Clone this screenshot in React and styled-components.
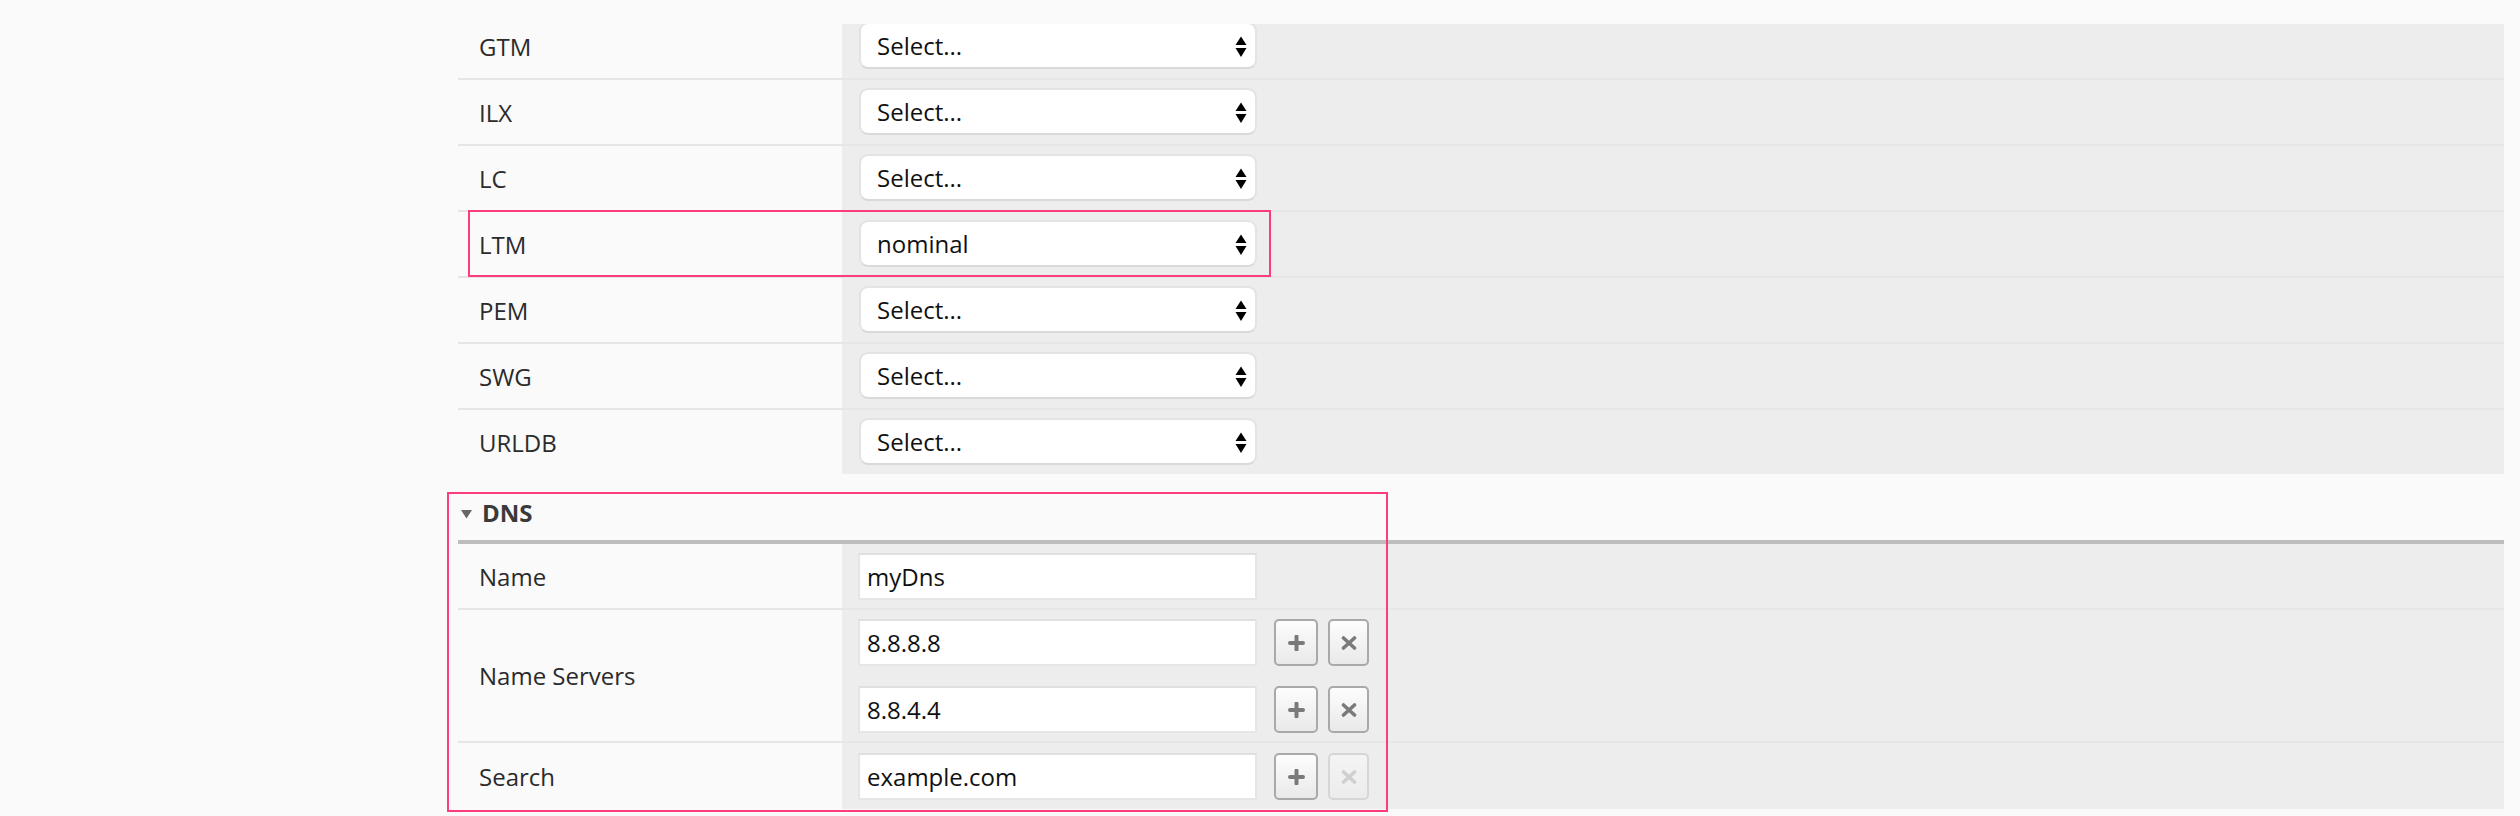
import React from "react";
import styled, { createGlobalStyle } from "styled-components";

const GlobalStyle = createGlobalStyle`
  html, body { margin: 0; padding: 0; }
  body {
    background: #fafafa;
    font-family: "Open Sans", "Liberation Sans", sans-serif;
    color: #2b2b2b;
  }
  * { box-sizing: border-box; }
`;

const Page = styled.div`
  width: 2520px;
  height: 816px;
  padding: 24px 16px 0 458px;
  overflow: hidden;
`;

const Clip = styled.div`
  overflow: hidden;
`;

const Table = styled.div`
  margin-top: ${(p) => p.$offset || 0}px;
`;

const Row = styled.div`
  position: relative;
  display: grid;
  grid-template-columns: 384px 1fr;
  border-bottom: ${(p) => (p.$last ? "none" : "2px solid #e6e6e6")};
`;

const Label = styled.div`
  display: flex;
  align-items: center;
  padding-left: 21px;
  font-size: 24px;
  color: #2b2b2b;
`;

const Value = styled.div`
  background: #ededed;
  padding: ${(p) => p.$pad || "8px 0 9px 17px"};
  display: flex;
  flex-direction: column;
  gap: 20px;
`;

const SelectBox = styled.div`
  position: relative;
  width: 398px;
  height: 47px;
  background: #fff;
  border: 2px solid #e3e3e3;
  border-bottom-color: #d9d9d9;
  border-radius: 9px;
  display: flex;
  align-items: center;
  padding-left: 16px;
  font-size: 24px;
  color: #111;
`;

const Arrows = styled.svg`
  position: absolute;
  right: 7px;
  top: 11px;
`;

const Highlight = styled.div`
  position: absolute;
  border: 2px solid #fb3d7b;
  pointer-events: none;
  left: ${(p) => p.$left}px;
  top: ${(p) => p.$top}px;
  width: ${(p) => p.$w}px;
  height: ${(p) => p.$h}px;
`;

const Section = styled.div`
  position: relative;
`;

const SectionHeader = styled.div`
  height: 70px;
  padding: 22px 0 0 2px;
  display: flex;
  align-items: flex-start;
  gap: 9px;
  border-bottom: 4px solid #bdbdbd;
  font-size: 24px;
  font-weight: 700;
  color: #3a3a3a;
  line-height: 33px;
`;

const Caret = styled.svg`
  margin-top: 13px;
`;

const Entry = styled.div`
  display: flex;
  align-items: center;
`;

const TextInput = styled.div`
  width: 399px;
  height: 47px;
  background: #fff;
  border: 2px solid #e6e6e6;
  border-top-color: #e0e0e0;
  display: flex;
  align-items: center;
  padding-left: 7px;
  font-size: 24px;
  color: #111;
  margin-left: -1px;
`;

const Buttons = styled.div`
  display: flex;
  gap: 10px;
  margin-left: 17px;
`;

const IconButton = styled.div`
  width: ${(p) => p.$w}px;
  height: 47px;
  border: 2px solid ${(p) => (p.$disabled ? "#d6d6d6" : "#a9a9a9")};
  border-radius: 5px;
  background: ${(p) =>
    p.$disabled
      ? "linear-gradient(#f4f4f4, #ececec)"
      : "linear-gradient(#fdfdfd, #e9e9e9)"};
  display: flex;
  align-items: center;
  justify-content: center;
  color: ${(p) => (p.$disabled ? "#cfcfcf" : "#7a7a7a")};
`;

const SelectArrows = () => (
  <Arrows width="14" height="24" viewBox="0 0 14 24">
    <path d="M7 1.5 L12.5 10 L1.5 10 Z" fill="#000" />
    <path d="M1.5 13 L12.5 13 L7 22 Z" fill="#000" />
  </Arrows>
);

const PlusIcon = () => (
  <svg width="17" height="16" viewBox="0 0 17 16">
    <path d="M8.5 1.5 V14.5 M2 8 H15" stroke="currentColor" strokeWidth="4" strokeLinecap="round" />
  </svg>
);

const TimesIcon = () => (
  <svg width="16" height="14" viewBox="0 0 16 14">
    <path d="M2.5 2 L13.5 12 M13.5 2 L2.5 12" stroke="currentColor" strokeWidth="3.6" strokeLinecap="round" />
  </svg>
);

const modules = [
  { name: "GTM", value: "Select..." },
  { name: "ILX", value: "Select..." },
  { name: "LC", value: "Select..." },
  { name: "LTM", value: "nominal", highlight: true },
  { name: "PEM", value: "Select..." },
  { name: "SWG", value: "Select..." },
  { name: "URLDB", value: "Select..." },
];

const EntryRow = ({ value, canRemove = true }) => (
  <Entry>
    <TextInput>{value}</TextInput>
    <Buttons>
      <IconButton $w={44}>
        <PlusIcon />
      </IconButton>
      <IconButton $w={41} $disabled={!canRemove}>
        <TimesIcon />
      </IconButton>
    </Buttons>
  </Entry>
);

export default function App() {
  return (
    <>
      <GlobalStyle />
      <Page>
        <Clip>
          <Table $offset={-10}>
            {modules.map((m, i) => (
              <Row key={m.name} $last={i === modules.length - 1}>
                <Label>{m.name}</Label>
                <Value>
                  <SelectBox>
                    {m.value}
                    <SelectArrows />
                  </SelectBox>
                </Value>
                {m.highlight && <Highlight $left={10} $top={-2} $w={803} $h={67} />}
              </Row>
            ))}
          </Table>
        </Clip>
        <Section>
          <SectionHeader>
            <Caret width="13" height="10" viewBox="0 0 13 10">
              <path d="M1 1 L12 1 L6.5 9.5 Z" fill="#666" />
            </Caret>
            DNS
          </SectionHeader>
          <Row>
            <Label>Name</Label>
            <Value $pad="9px 0 8px 17px">
              <Entry>
                <TextInput>myDns</TextInput>
              </Entry>
            </Value>
          </Row>
          <Row>
            <Label>Name Servers</Label>
            <Value $pad="9px 0 8px 17px">
              <EntryRow value="8.8.8.8" />
              <EntryRow value="8.8.4.4" />
            </Value>
          </Row>
          <Row $last>
            <Label>Search</Label>
            <Value $pad="10px 0 9px 17px">
              <EntryRow value="example.com" canRemove={false} />
            </Value>
          </Row>
          <Highlight $left={-11} $top={18} $w={941} $h={320} />
        </Section>
      </Page>
    </>
  );
}
